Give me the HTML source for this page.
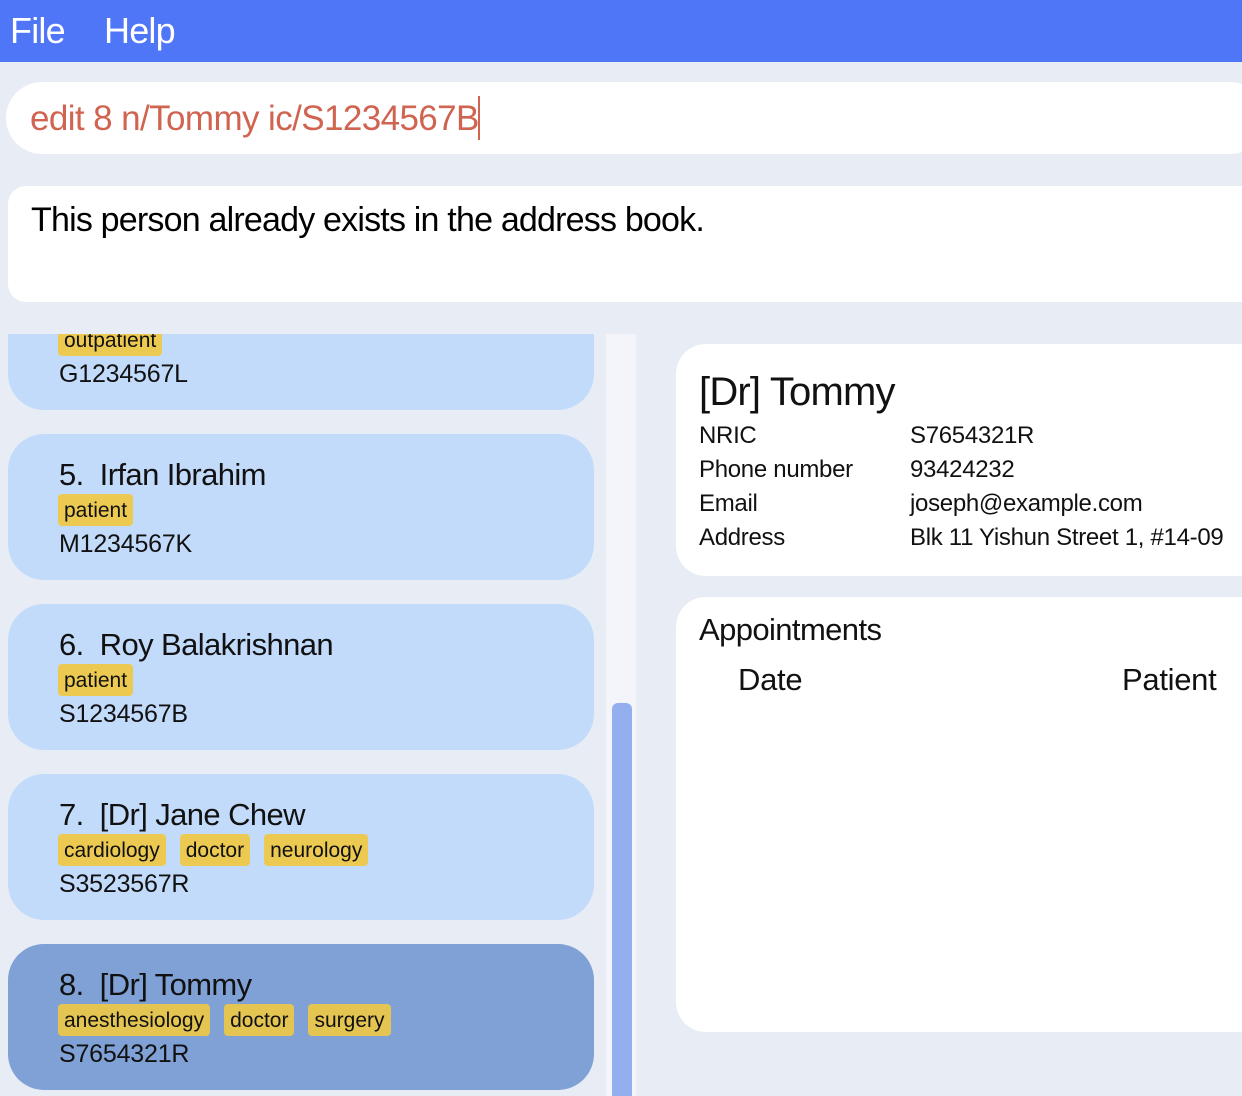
<!DOCTYPE html>
<html><head><meta charset="utf-8"><style>
*{margin:0;padding:0;box-sizing:border-box}
html,body{width:1242px;height:1096px;overflow:hidden}
body{background:#e7ecf5;font-family:"Liberation Sans",sans-serif;color:#111;position:relative;letter-spacing:-0.3px}
.abs{position:absolute;white-space:nowrap}
.menu{left:0;top:0;width:1242px;height:62px;background:#4f76f6}
.menu span{position:absolute;top:10px;color:#fff;font-size:36px;letter-spacing:-0.8px}
.cmd{left:6px;top:82px;width:1260px;height:72px;background:#fff;border-radius:36px}
.res{left:8px;top:186px;width:1260px;height:116px;background:#fff;border-radius:18px}
.card{left:8px;width:586px;height:146px;background:#c3dbfb;border-radius:36px}
.card.sel{background:#7fa1d5}
.name{position:absolute;left:51px;top:23px;font-size:31px;letter-spacing:-0.6px}
.tags{position:absolute;left:50px;top:60px;display:flex;gap:14px}
.tag{background:#ecca52;border-radius:4px;height:32px;line-height:33px;padding:0 6px;font-size:21px;letter-spacing:0}
.sel .tag{background:#e5c552}
.id{position:absolute;left:51px;top:96px;font-size:25px;letter-spacing:-0.2px}
.panel{background:#fff;border-radius:30px}
.row{position:absolute;font-size:24px}
</style></head><body>
<div class="abs menu"><span style="left:10px">File</span><span style="left:104px">Help</span></div>
<div class="abs cmd"><span class="abs" style="left:24px;top:17px;font-size:35px;color:#d06450;letter-spacing:-0.6px">edit 8 n/Tommy ic/S1234567B</span><span class="abs" style="left:472px;top:14px;width:2px;height:44px;background:#d06450"></span></div>
<div class="abs res"><span class="abs" style="left:23px;top:15px;font-size:34px;color:#000;letter-spacing:-0.8px">This person already exists in the address book.</span></div>

<div class="abs" style="left:0;top:334px;width:606px;height:762px;overflow:hidden">
 <div class="abs card" style="top:-70px"><div class="tags"><div class="tag">outpatient</div></div><div class="id">G1234567L</div></div>
 <div class="abs card" style="top:100px"><div class="name">5.&nbsp; Irfan Ibrahim</div><div class="tags"><div class="tag">patient</div></div><div class="id">M1234567K</div></div>
 <div class="abs card" style="top:270px"><div class="name">6.&nbsp; Roy Balakrishnan</div><div class="tags"><div class="tag">patient</div></div><div class="id">S1234567B</div></div>
 <div class="abs card" style="top:440px"><div class="name">7.&nbsp; [Dr] Jane Chew</div><div class="tags"><div class="tag">cardiology</div><div class="tag">doctor</div><div class="tag">neurology</div></div><div class="id">S3523567R</div></div>
 <div class="abs card sel" style="top:610px"><div class="name">8.&nbsp; [Dr] Tommy</div><div class="tags"><div class="tag">anesthesiology</div><div class="tag">doctor</div><div class="tag">surgery</div></div><div class="id">S7654321R</div></div>
</div>
<div class="abs" style="left:606px;top:334px;width:30px;height:762px;background:#f3f5fa"></div>
<div class="abs" style="left:612px;top:703px;width:20px;height:393px;background:#93aff0;border-radius:6px 6px 0 0"></div>

<div class="abs panel" style="left:676px;top:344px;width:600px;height:232px">
 <div class="row" style="left:23px;top:26px;font-size:40px;letter-spacing:-0.8px">[Dr] Tommy</div>
 <div class="row" style="left:23px;top:78px">NRIC</div><div class="row" style="left:234px;top:78px">S7654321R</div>
 <div class="row" style="left:23px;top:112px">Phone number</div><div class="row" style="left:234px;top:112px">93424232</div>
 <div class="row" style="left:23px;top:146px">Email</div><div class="row" style="left:234px;top:146px">joseph@example.com</div>
 <div class="row" style="left:23px;top:180px">Address</div><div class="row" style="left:234px;top:180px">Blk 11 Yishun Street 1, #14-09</div>
</div>
<div class="abs panel" style="left:676px;top:597px;width:600px;height:435px">
 <div class="row" style="left:23px;top:15px;font-size:31px;letter-spacing:-0.6px">Appointments</div>
 <div class="row" style="left:62px;top:65px;font-size:31px">Date</div>
 <div class="row" style="left:446px;top:65px;font-size:31px">Patient</div>
</div>
</body></html>
